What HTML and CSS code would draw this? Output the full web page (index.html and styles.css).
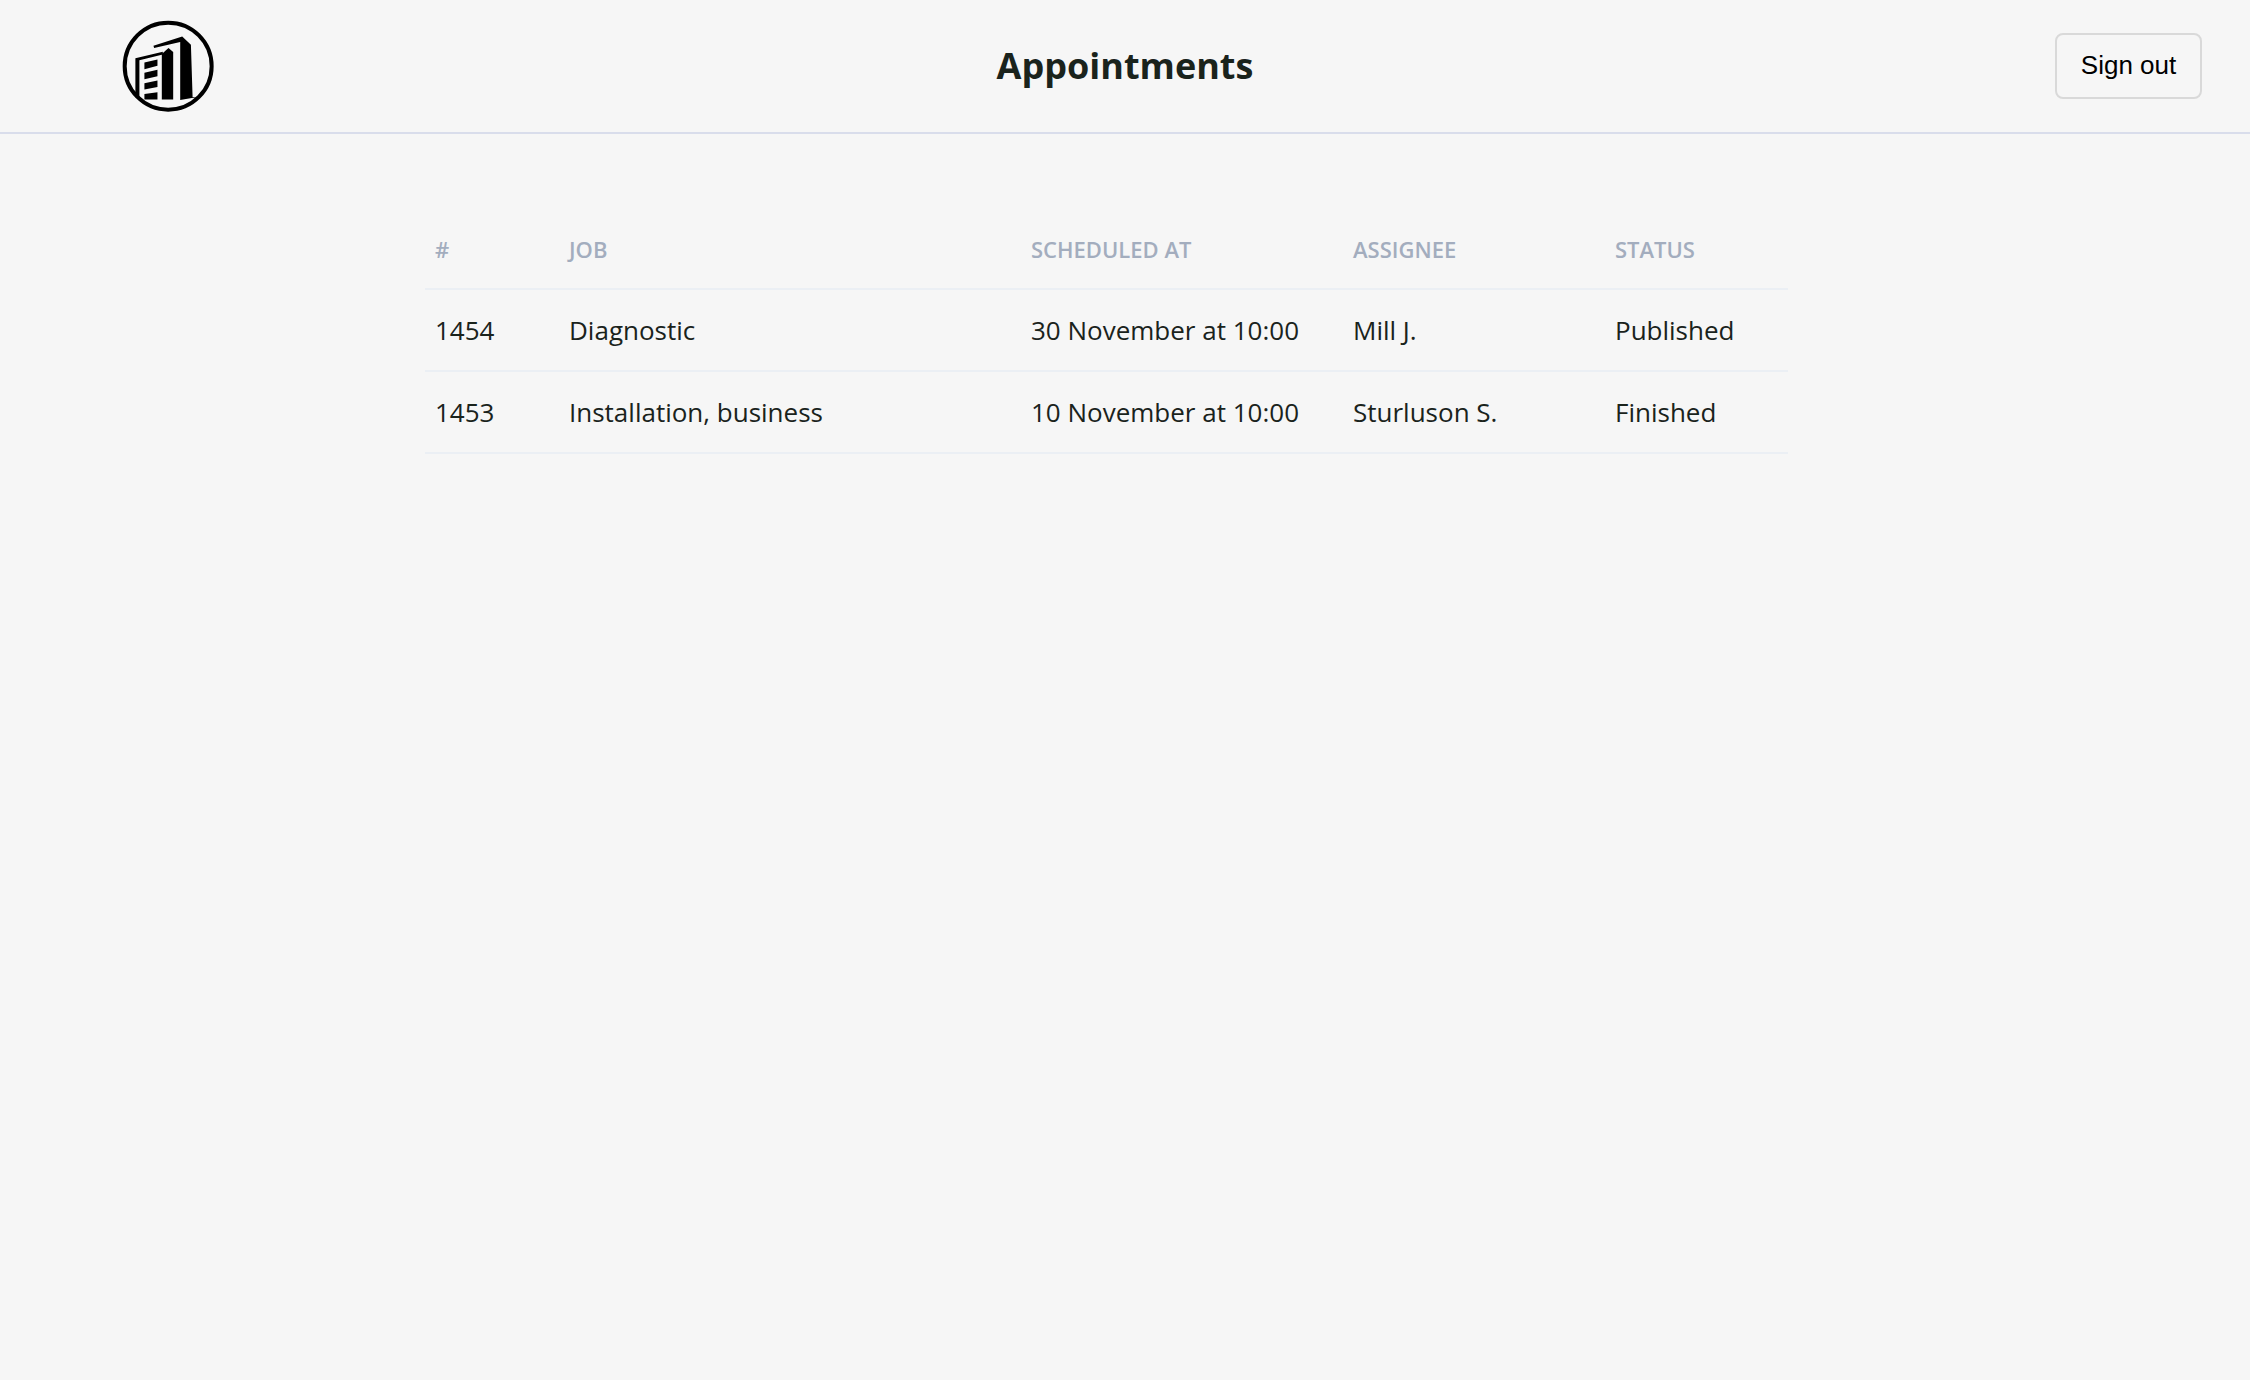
FILE: index.html
```html
<!DOCTYPE html>
<html lang="en">
<head>
<meta charset="utf-8">
<title>Appointments</title>
<link rel="stylesheet" href="styles.css">
</head>
<body>
<header class="topbar">
  <div class="logo-slot">
    <svg class="logo" viewBox="60 48 290 290" aria-label="Logo">
      <circle cx="204" cy="192" r="130" fill="none" stroke="#000" stroke-width="12"/>
      <path d="M106 168 L188 149 L188 157 L118 174 L118 285 L106 285 Z"/>
      <path d="M133 181 L172 172 L172 191 L133 201 Z M133 212 L172 203 L172 222 L133 231 Z M133 243 L172 235 L172 254 L133 262 Z M133 275 L172 270 L172 292 L133 292 Z"/>
      <path d="M185 156 L205 138 L219 150 L219 292 L185 292 Z"/>
      <path d="M160 131 L246 103 L272 128 L277 284 L292 284 L240 293 L240 120 L162 138 Z"/>
    </svg>
  </div>
  <h1 class="title">Appointments</h1>
  <div class="actions"><button class="signout" type="button">Sign out</button></div>
</header>
<main class="content">
  <table class="jobs">
    <colgroup>
      <col class="c1"><col class="c2"><col class="c3"><col class="c4"><col class="c5">
    </colgroup>
    <thead>
      <tr><th>#</th><th>JOB</th><th>SCHEDULED AT</th><th>ASSIGNEE</th><th>STATUS</th></tr>
    </thead>
    <tbody>
      <tr><td>1454</td><td>Diagnostic</td><td>30 November at 10:00</td><td>Mill J.</td><td>Published</td></tr>
      <tr><td>1453</td><td>Installation, business</td><td>10 November at 10:00</td><td>Sturluson S.</td><td>Finished</td></tr>
    </tbody>
  </table>
</main>
</body>
</html>
```
FILE: styles.css
```css
* { box-sizing: border-box; }
html, body { margin: 0; height: 100%; }
body {
  background: #f6f6f6;
  color: #1a231c;
  font-family: "Open Sans", sans-serif;
}
.topbar {
  display: grid;
  grid-template-columns: 1fr auto 1fr;
  align-items: center;
  height: 134px;
  border-bottom: 2px solid #d9ddeb;
  padding: 0 48px;
}
.logo-slot { display: flex; padding-left: 72px; }
.logo { width: 97px; height: 97px; display: block; }
.title {
  margin: 0;
  font-size: 36px;
  font-weight: 700;
  line-height: 48px;
  color: #1a231c;
}
.actions { display: flex; justify-content: flex-end; }
.signout {
  width: 147px;
  height: 66px;
  background: #f6f6f6;
  border: 2px solid #d9d9d9;
  border-radius: 8px;
  font-family: "Liberation Sans", Arial, sans-serif;
  font-size: 26px;
  color: #000;
  padding: 0 0 2px;
}
.content { padding: 80px 0 0 425px; }
.jobs {
  width: 1363px;
  table-layout: fixed;
  border-collapse: collapse;
}
.c1 { width: 134px; }
.c2 { width: 462px; }
.c3 { width: 322px; }
.c4 { width: 262px; }
.c5 { width: 183px; }
.jobs th, .jobs td {
  padding: 0 10px;
  text-align: left;
  border-bottom: 2px solid #ebeff4;
  white-space: nowrap;
}
.jobs th {
  height: 75px;
  padding-bottom: 4px;
  font-size: 22px;
  font-weight: 600;
  color: #a3adbe;
}
.jobs td {
  height: 82px;
  font-size: 26px;
  font-weight: 400;
  color: #1a231c;
}
```
